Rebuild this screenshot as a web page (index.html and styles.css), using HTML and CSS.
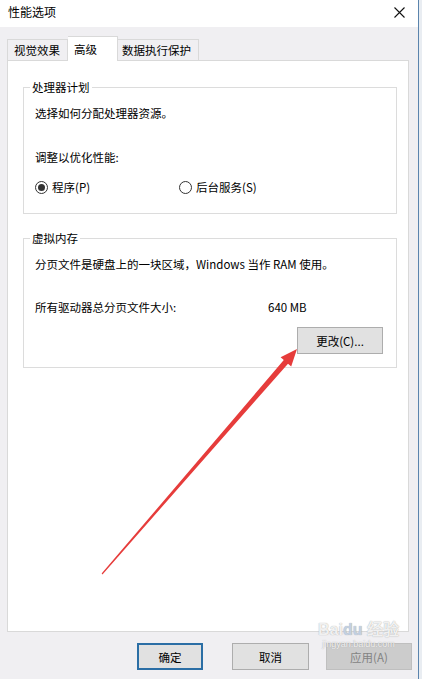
FILE: index.html
```html
<!DOCTYPE html>
<html lang="zh-CN">
<head>
    <meta charset="UTF-8">
    <meta name="viewport" content="width=device-width, initial-scale=1.0">
    <title>性能选项</title>
    <link rel="stylesheet" href="styles.css">
</head>
<body>
    <div class="window">
        <div class="titlebar">
            <span class="title">性能选项</span>
            <svg class="close" width="11" height="11" viewBox="0 0 11 11">
                <path d="M0.5 0.5L10.5 10.5M10.5 0.5L0.5 10.5" stroke="#111" stroke-width="1.1"/>
            </svg>
        </div>

        <div class="client">
            <div class="tabs">
                <div class="tab tab-visual">视觉效果</div>
                <div class="tab tab-advanced active">高级</div>
                <div class="tab tab-dep">数据执行保护</div>
            </div>

            <div class="panel">
                <fieldset class="group group-cpu">
                    <legend>处理器计划</legend>
                    <p class="intro">选择如何分配处理器资源。</p>
                    <p class="label">调整以优化性能:</p>
                    <div class="radios">
                        <label class="radio checked"><span class="dot"></span>程序(P)</label>
                        <label class="radio"><span class="dot"></span>后台服务(S)</label>
                    </div>
                </fieldset>

                <fieldset class="group group-memory">
                    <legend>虚拟内存</legend>
                    <p class="intro">分页文件是硬盘上的一块区域，Windows 当作 RAM 使用。</p>
                    <div class="size-row">
                        <span>所有驱动器总分页文件大小:</span>
                        <span>640 MB</span>
                    </div>
                    <div class="change-row">
                        <button class="btn btn-change">更改(C)...</button>
                    </div>
                </fieldset>
            </div>

            <div class="actions">
                <button class="btn btn-ok">确定</button>
                <button class="btn btn-cancel">取消</button>
                <button class="btn btn-apply" disabled>应用(A)</button>
            </div>
        </div>
    </div>

    <!-- red arrow drawn over the screenshot -->
    <svg class="arrow" width="422" height="679" viewBox="0 0 422 679">
        <polygon fill="#e63c3b" points="102.5,574.4 288,363.7 291.2,366.5 297,349 280.6,357.3 283.8,360.1 101.6,573.6"/>
    </svg>

    <div class="watermark">
        <span class="wm-logo">Bai<span class="wm-du">du</span> 经验</span>
        <span class="wm-url">jingyan.baidu.com</span>
    </div>
</body>
</html>
```

FILE: styles.css
```css
body {
    margin: 0;
    padding: 0;
    width: 422px;
    height: 679px;
    overflow: hidden;
    background-color: #e9edf2;
    font-family: "Noto Sans CJK SC", "Microsoft YaHei", sans-serif;
    font-size: 11.5px;
    line-height: 16px;
    color: #000;
    position: relative;
}

.window {
    width: 419px;
    height: 679px;
    box-sizing: border-box;
    border-right: 1px solid #5b84ad;
    display: flex;
    flex-direction: column;
}

.titlebar {
    height: 27px;
    background-color: #fff;
    display: flex;
    align-items: center;
    justify-content: space-between;
    padding: 0 13px 3px 8px;
    box-sizing: border-box;
    font-size: 12px;
}

.client {
    flex: 1;
    background-color: #f0eff2;
    padding: 9px 9px 0 7px;
}

.tabs {
    display: flex;
    align-items: flex-end;
    height: 24px;
    position: relative;
    z-index: 1;
}

.tab {
    height: 21px;
    box-sizing: border-box;
    border: 1px solid #d9d9d9;
    border-bottom: none;
    background-color: #f0eff2;
    padding: 0 0 0 6px;
    line-height: 20px;
}

.tab-visual {
    width: 61px;
}

.tab-advanced {
    width: 50px;
}

.tab-dep {
    width: 81px;
    padding-left: 4px;
}

.tab.active {
    height: 25px;
    margin-bottom: -1px;
    background-color: #fff;
    border-left: 1px solid #d9d9d9;
    border-right: 1px solid #d9d9d9;
    line-height: 25px;
}

.tab-visual + .active {
    border-left: none;
}

.active + .tab {
    border-left: none;
}

.panel {
    height: 572px;
    box-sizing: border-box;
    border: 1px solid #d9d9d9;
    background-color: #fff;
    padding: 18px 11px 0 15px;
}

.group {
    margin: 0;
    border: 1px solid #dcdcdc;
    padding: 0 11px 18px 11px;
}

.group legend {
    padding: 0 2px;
    margin-left: -5px;
    line-height: 16px;
}

.group p {
    margin: 0;
}

.intro {
    margin-top: 10px !important;
}

.label {
    margin-top: 28px !important;
}

.radios {
    margin-top: 14px;
    display: grid;
    grid-template-columns: 144px auto;
}

.radio {
    display: flex;
    align-items: center;
    gap: 4px;
}

.dot {
    width: 13px;
    height: 13px;
    box-sizing: border-box;
    border: 1px solid #333;
    border-radius: 50%;
    display: flex;
    align-items: center;
    justify-content: center;
    background-color: #fff;
}

.radio.checked .dot::after {
    content: "";
    width: 7px;
    height: 7px;
    border-radius: 50%;
    background-color: #333;
}

.group-memory {
    margin-top: 16px;
    padding-bottom: 13px;
    padding-right: 13px;
}

.size-row {
    margin-top: 27px;
    display: grid;
    grid-template-columns: 233px auto;
}

.change-row {
    margin-top: 12px;
    display: flex;
    justify-content: flex-end;
}

.btn {
    font-family: inherit;
    font-size: 11.5px;
    height: 27px;
    box-sizing: border-box;
    border: 1px solid #adadad;
    background-color: #e1e1e1;
    color: #000;
    padding: 0;
    flex-shrink: 0;
}

.btn-change {
    width: 86px;
}

.actions {
    display: flex;
    margin-top: 11px;
    margin-right: -9px;
}

.btn-ok {
    width: 66px;
    margin-left: 130px;
    border: 2px solid #2b6ea5;
}

.btn-cancel {
    width: 77px;
    margin-left: 29px;
}

.btn-apply {
    width: 86px;
    margin-left: 17px;
    background-color: #cccccc;
    border-color: #bfbfbf;
    color: #838383;
}

.arrow {
    position: absolute;
    top: 0;
    left: 0;
    pointer-events: none;
}

.watermark {
    position: absolute;
    left: 318px;
    top: 621px;
    display: flex;
    flex-direction: column;
    align-items: center;
    color: rgba(255, 255, 255, 0.85);
    text-shadow: 0 0 1px #9a9a9a;
    pointer-events: none;
}

.wm-logo {
    font-family: "Liberation Sans", Arial, sans-serif;
    font-size: 16px;
    font-weight: bold;
    line-height: 17px;
}

.wm-du {
    color: rgba(200, 215, 235, 0.9);
}

.wm-url {
    font-family: "Liberation Sans", Arial, sans-serif;
    font-size: 9px;
    line-height: 10px;
    margin-top: 1px;
}
```
